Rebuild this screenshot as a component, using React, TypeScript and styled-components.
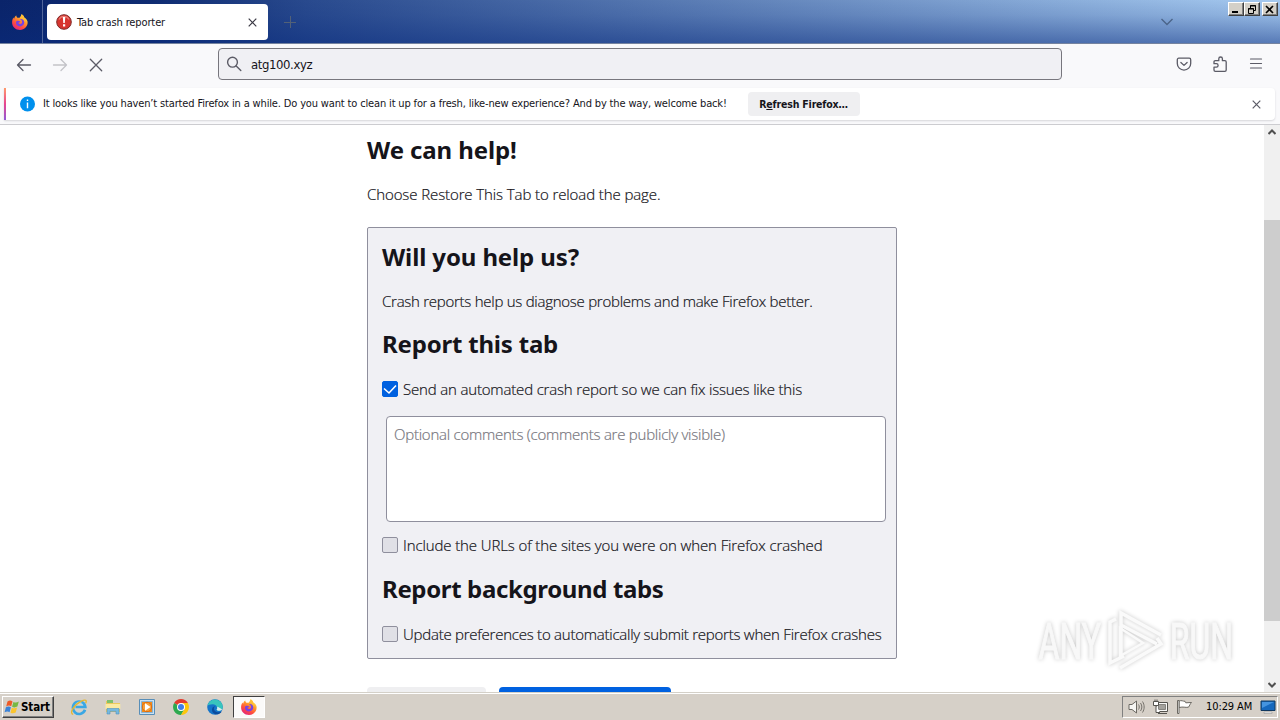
import React from 'react';
import styled, { createGlobalStyle, css } from 'styled-components';

const GlobalStyle = createGlobalStyle`
  * {
    box-sizing: border-box;
  }

  body {
    margin: 0;
    overflow: hidden;
    background: #fff;
    color: #15141a;
    font-family: 'DejaVu Sans Condensed', 'DejaVu Sans', sans-serif;
    font-stretch: condensed;
    font-size: 11px;
  }

  h2, p {
    margin: 0;
  }
`;

const Screen = styled.div`
  position: relative;
  display: flex;
  flex-direction: column;
  width: 1280px;
  height: 720px;
  overflow: hidden;
`;

const Label = styled.span<{ $track?: number; $size?: number }>`
  font-size: ${({ $size }) => $size || 11}px;
  letter-spacing: ${({ $track }) => $track || 0}px;
  line-height: 16px;
  white-space: nowrap;
`;

/* ---- title bar ---- */

const TitleBar = styled.header`
  display: flex;
  flex: none;
  height: 44px;
  border-bottom: 1px solid #75839f;
  background:
    linear-gradient(180deg, rgba(10, 44, 126, 0) 0%, rgba(10, 44, 126, 0.12) 35%, rgba(10, 44, 126, 0.5) 100%),
    linear-gradient(90deg, #0a246a 0%, #0f2c72 12%, #294a8e 24%, #a6caf0 100%);
`;

const FirefoxView = styled.div`
  display: flex;
  align-items: center;
  justify-content: center;
  width: 43px;
  padding-right: 3px;
  border-right: 1px solid #50659a;
`;

const Tab = styled.div`
  display: flex;
  align-items: center;
  width: 221px;
  height: 36px;
  margin: 4px 0 0 4px;
  padding: 0 11px 0 9px;
  border-radius: 4px;
  background: #fff;

  ${Label} {
    flex: 1;
    margin-left: 5px;
    padding-top: 2px;
  }
`;

const NewTab = styled.div`
  display: flex;
  align-items: center;
  width: 44px;
  justify-content: center;
  padding-top: 1px;
`;

const TabListButton = styled.div`
  display: flex;
  align-items: center;
  margin-left: auto;
  margin-right: 55px;
`;

const WindowButtons = styled.div`
  display: flex;
  width: 52px;
  padding-top: 2px;
`;

const WindowButton = styled.div<{ $gap?: boolean }>`
  display: flex;
  align-items: center;
  justify-content: center;
  width: 16px;
  height: 14px;
  margin-left: ${({ $gap }) => ($gap ? 2 : 0)}px;
  background: #d4d0c8;
  border: 1px solid;
  border-color: #fff #404040 #404040 #fff;
  box-shadow: inset -1px -1px 0 #808080;
`;

/* ---- toolbar ---- */

const Toolbar = styled.nav`
  display: flex;
  flex: none;
  align-items: center;
  height: 44px;
  padding: 0 16px 4px;
  background: #f9f9fb;
`;

const NavButtons = styled.div`
  display: flex;
  gap: 20px;
  width: 202px;
  padding-top: 2px;
`;

const UrlBar = styled.div`
  display: flex;
  align-items: center;
  width: 844px;
  height: 32px;
  padding-left: 7px;
  border: 1px solid #77767d;
  border-radius: 4px;
  background: #f0f0f4;

  ${Label} {
    margin-left: 9px;
    padding-top: 2px;
  }
`;

const ToolbarActions = styled.div`
  display: flex;
  gap: 20px;
  margin-left: auto;
`;

/* ---- notification ---- */

const NotificationArea = styled.div`
  flex: none;
  height: 37px;
  padding: 0 5px 4px 4px;
  border-bottom: 1px solid #ccccd0;
  background: #f9f9fb;
`;

const Notification = styled.div`
  display: flex;
  align-items: center;
  height: 32px;
  border-radius: 0 4px 4px 0;
  background: #fff;
  box-shadow: 0 1px 2px rgba(58, 57, 68, 0.18);

  &::before {
    content: '';
    width: 2px;
    height: 32px;
    margin-right: 13px;
    background: linear-gradient(180deg, #ff9a6c 0%, #e7458f 50%, #9059d6 100%);
  }
`;

const Message = styled(Label)`
  width: 685px;
  margin-left: 8px;
`;

const RefreshButton = styled.div`
  display: flex;
  align-items: center;
  justify-content: center;
  width: 112px;
  height: 24px;
  margin-left: 20px;
  padding-right: 1px;
  border-radius: 4px;
  background: #efeff1;
  font-size: 10.5px;
  font-weight: 700;
  letter-spacing: -0.18px;
  white-space: nowrap;
`;

const CloseNotification = styled.div`
  display: flex;
  margin-left: auto;
  margin-right: 14px;
`;

/* ---- page ---- */

const Viewport = styled.div`
  display: flex;
  flex: 1;
  min-height: 0;
`;

const Page = styled.main`
  flex: 1;
  padding: 10px 0 0 367px;
  overflow: hidden;
`;

const Title = styled.h2<{ $track?: number }>`
  height: 30px;
  font-family: 'Noto Sans', sans-serif;
  font-stretch: normal;
  font-size: 24px;
  font-weight: 700;
  line-height: 30px;
  letter-spacing: ${({ $track }) => $track || 0}px;
  white-space: nowrap;
`;

const bodyText = css<{ $track?: number }>`
  font-family: 'Open Sans', sans-serif;
  font-stretch: normal;
  font-size: 15px;
  font-weight: 300;
  line-height: 22px;
  letter-spacing: ${({ $track }) => $track || 0}px;
  white-space: nowrap;
  -webkit-text-stroke: 0.2px currentColor;
`;

const Paragraph = styled.p<{ $track?: number }>`
  ${bodyText}
  margin: 18px 0 22px;
`;

const ReportBox = styled.section`
  width: 530px;
  height: 432px;
  padding: 14px 10px 0 14px;
  border: 1px solid #8f8f9d;
  border-radius: 2px;
  background: #f0f0f4;

  ${Paragraph} {
    margin-bottom: 17px;
  }
`;

const CheckRow = styled.label`
  display: flex;
  align-items: center;
  gap: 5px;
  height: 22px;

  ${Title} + & {
    margin-top: 19px;
  }

  & + ${Title} {
    margin-top: 18px;
  }
`;

const CheckText = styled.span<{ $track?: number }>`
  ${bodyText}
`;

const CheckBox = styled.span<{ $checked?: boolean }>`
  display: flex;
  flex: none;
  align-items: center;
  justify-content: center;
  width: 16px;
  height: 16px;
  border: 1px solid ${({ $checked }) => ($checked ? '#0061e0' : '#8f8f9d')};
  border-radius: 2px;
  background: ${({ $checked }) => ($checked ? '#0061e0' : '#e0e0e6')};
`;

const Comments = styled.div<{ $track?: number }>`
  ${bodyText}
  width: 500px;
  height: 106px;
  margin: 16px 0 12px 4px;
  padding: 6px 7px;
  border: 1px solid #8f8f9d;
  border-radius: 4px;
  background: #fff;
  color: #77767d;
`;

const ButtonRow = styled.div`
  display: flex;
  gap: 13px;
  margin-top: 28px;
`;

const PageButton = styled.div<{ $primary?: boolean }>`
  width: ${({ $primary }) => ($primary ? 172 : 119)}px;
  height: 32px;
  border-radius: 4px;
  background: ${({ $primary }) => ($primary ? '#0061e0' : '#efeff1')};
`;

const ScrollBar = styled.div`
  display: flex;
  flex-direction: column;
  align-items: center;
  width: 16px;
  padding: 4px 0;
  background: #f0f0f0;
`;

const ScrollThumb = styled.div`
  width: 16px;
  height: 401px;
  margin: 85px 0 auto;
  background: #cdcdcd;
`;

/* ---- taskbar ---- */

const Taskbar = styled.footer`
  display: flex;
  flex: none;
  align-items: center;
  height: 28px;
  padding: 1px 2px 0;
  border-top: 1px solid #d4d0c8;
  background: #d6d0c8;
  box-shadow: inset 0 1px 0 #fff;
`;

const StartButton = styled.div`
  display: flex;
  align-items: center;
  width: 52px;
  height: 22px;
  padding: 0 1px;
  border: 1px solid;
  border-color: #fff #404040 #404040 #fff;
  box-shadow: inset -1px -1px 0 #808080;
  font-size: 11.5px;
  font-weight: 700;
  letter-spacing: -0.1px;
  color: #000;
`;

const QuickLaunch = styled.div`
  display: flex;
  align-items: center;
  margin-left: 8px;
`;

const TaskItem = styled.div<{ $active?: boolean }>`
  display: flex;
  align-items: center;
  justify-content: center;
  width: ${({ $active }) => ($active ? 32 : 34)}px;
  height: 22px;

  ${({ $active }) => $active && css`
    margin-left: 1px;
    border: 1px solid;
    border-color: #404040 #fff #fff #404040;
    background: #fbfaf9;
  `}
`;

const Tray = styled.div`
  display: flex;
  align-items: center;
  width: 156px;
  height: 22px;
  margin-left: auto;
  padding: 0 1px 0 5px;
  border: 1px solid;
  border-color: #808080 #fff #fff #808080;
  color: #000;

  svg {
    margin-right: 7px;
  }

  ${Label} {
    margin-left: 6px;
  }

  svg:last-child {
    margin: 0 0 0 auto;
  }
`;

const Watermark = styled.div`
  position: absolute;
  top: 608px;
  left: 1036px;
  display: flex;
  align-items: center;
  height: 64px;
  filter: drop-shadow(0 0 2px rgba(0, 0, 0, 0.22));
`;

const WatermarkWord = styled.span<{ $width: number }>`
  display: flex;
  justify-content: center;
  width: ${({ $width }) => $width}px;
  color: #f8f8f8;
  font-family: Roboto, sans-serif;
  font-stretch: normal;
  font-size: 50px;
  line-height: 64px;
  -webkit-text-stroke: 1px #f8f8f8;

  span {
    transform: translateY(2px) scaleX(0.64);
  }
`;

/* ---- icons ---- */

const FirefoxIcon = ({ id }: { id: string }) => (
  <svg width="16" height="16" viewBox="0 0 16 16">
    <defs>
      <linearGradient id={id} x1="0.85" y1="0.1" x2="0.3" y2="1">
        <stop offset="0" stopColor="#fff04f" />
        <stop offset="0.35" stopColor="#ff9a2b" />
        <stop offset="0.7" stopColor="#ff4b3e" />
        <stop offset="1" stopColor="#e3257d" />
      </linearGradient>
    </defs>
    <path fill={`url(#${id})`} d="M9.6.2c1.6.9 2.3 2 2.7 3.2 1.7.8 2.9 2.3 3.3 4.3.4 4.6-3.200 8.200-7.600 8.200C3.500 15.900.1 12.600.1 8.400c0-2 .5-3.700 1.400-5 .1.600.3 1 .6 1.300C2.500 3.300 3.200 2.200 4.300 1.500c0 1 .4 1.700 1.100 2.200.8-.1 1.600-.1 2.200.1C8.200 2.700 9.200 1.700 9.600.2z" />
    <path fill="#7542e5" d="M8 5.100c2.500-.5 4.400 1.300 4.300 3.500-.1 2.300-1.900 3.900-4.200 3.900-2.200 0-4-1.500-4.100-3.500-.1-1.400.7-2.300 1.800-2.200 1 0 1.300.7 2.700.5-.2 1-1.300 1.100-2.200 1.500.4 1 1.400 1.400 2.500 1.200 1.900-.5 1.700-3.300-.8-4.900z" />
    <path fill="#ffbd36" d="M9.600.2c1.600.9 2.300 2.200 2.700 3.600.8 1.300 1 3.100.3 4.600.1-1.900-.9-3.500-2.500-3.800C8.700 3.800 8.900 1.700 9.600.2z" />
  </svg>
);

const CrashIcon = () => (
  <svg width="16" height="16" viewBox="0 0 16 16">
    <circle cx="8" cy="8" r="7.3" fill="#d7352f" stroke="#7d2a28" />
    <path d="M3 5.500a5.600 5.600 0 0 1 10 0" fill="none" stroke="#ee7d75" strokeWidth="1.2" />
    <path d="M6.800 3h2.500l-.5 6H7.300zM7 10.300h2.200v2.200H7z" fill="#fff" />
  </svg>
);

const CrossIcon = ({ size, color = '#3a3944' }: { size: number; color?: string }) => (
  <svg width={size} height={size} viewBox="0 0 9 9" fill="none" stroke={color} strokeWidth="1.2">
    <path d="m.7.7 7.600 7.600M8.300.7.7 8.300" />
  </svg>
);

const ArrowIcon = ({ forward }: { forward?: boolean }) => (
  <svg width="16" height="16" viewBox="0 0 16 16" fill="none" stroke={forward ? '#c3c3c8' : '#5b5b66'} strokeWidth="1.3" strokeLinecap="round" strokeLinejoin="round">
    <path d={forward ? 'M1.500 8h13M9 2.500 14.500 8 9 13.500' : 'M14.500 8h-13M7 2.500 1.500 8 7 13.500'} />
  </svg>
);

const StopIcon = () => (
  <svg width="16" height="16" viewBox="0 0 16 16" fill="none" stroke="#5b5b66" strokeWidth="1.3" strokeLinecap="round">
    <path d="m2.300 2.300 11.400 11.400m0-11.400L2.300 13.700" />
  </svg>
);

const SearchIcon = () => (
  <svg width="16" height="16" viewBox="0 0 16 16" fill="none" stroke="#5b5b66" strokeWidth="1.4" strokeLinecap="round">
    <circle cx="6.5" cy="6.2" r="4.9" />
    <path d="m10.200 9.900 4.600 4.600" />
  </svg>
);

const PocketIcon = () => (
  <svg width="16" height="16" viewBox="0 0 16 16" fill="none" stroke="#5b5b66" strokeWidth="1.3" strokeLinecap="round" strokeLinejoin="round">
    <path d="M2.800 2.200h10.400c.9 0 1.500.6 1.500 1.500v3.700a6.700 6.700 0 0 1-13.400 0V3.700c0-.9.6-1.500 1.500-1.500z" />
    <path d="M4.900 6.500 8 9.400l3.100-2.900" />
  </svg>
);

const ExtensionIcon = () => (
  <svg width="16" height="16" viewBox="0 0 16 16" fill="none" stroke="#5b5b66" strokeWidth="1.3" strokeLinejoin="round">
    <path d="M3.300 15.300h9.600c.8 0 1.300-.5 1.300-1.300V6c0-.8-.5-1.300-1.300-1.300h-2.500V2.800a1.800 1.800 0 0 0-3.600 0v1.900H3.300C2.500 4.700 2 5.200 2 6v1.700h2.400a1.700 1.700 0 0 1 0 3.400H2V14c0 .8.5 1.300 1.300 1.300z" />
  </svg>
);

const MenuIcon = () => (
  <svg width="16" height="16" viewBox="0 0 16 16" stroke="#5b5b66" strokeWidth="1.2" strokeLinecap="round">
    <path d="M2.500 3h11M2.500 7.500h11M2.500 12h11" />
  </svg>
);

const InfoIcon = () => (
  <svg width="16" height="16" viewBox="0 0 16 16">
    <circle cx="8.5" cy="8" r="7.5" fill="#0090ed" />
    <path d="M7.800 3.500h1.400V5H7.800zM7.800 6.500h1.400v5.800H7.800z" fill="#fff" />
  </svg>
);

const Chevron = ({ up, size = 8, color = '#505050', weight = 2 }: { up?: boolean; size?: number; color?: string; weight?: number }) => (
  <svg width={size} height={size / 2 + 2} viewBox={`0 0 ${size} ${size / 2 + 2}`} fill="none" stroke={color} strokeWidth={weight}>
    <path d={up ? `M.5 ${size / 2 + 1} ${size / 2} 1.500l${size / 2 - 0.5} ${size / 2 - 0.5}` : `M.5 1l${size / 2 - 0.5} ${size / 2 - 0.5} ${size / 2 - 0.5}-${size / 2 - 0.5}`} />
  </svg>
);

const StartFlag = () => (
  <svg width="17" height="16" viewBox="0 0 17 16">
    <path d="M3.500 2.500C5.500 1.200 7 1.500 8.500 2.400L7.200 7.300C5.700 6.400 4.200 6.300 2.200 7.400z" fill="#ee5a27" />
    <path d="M9.400 2.900c1.800.8 3.400.8 5.400-.3l-1.400 5c-1.900 1-3.600 1.100-5.300.2z" fill="#76b843" />
    <path d="M1.900 8.300c1.900-1 3.500-1 5-.1l-1.300 5c-1.500-.9-3-1-5 .1z" fill="#3b83d8" />
    <path d="M7.800 8.700c1.800.9 3.400.8 5.300-.2l-1.400 5c-1.900 1-3.500 1-5.200.2z" fill="#fbc52e" />
  </svg>
);

const ExplorerIcon = () => (
  <svg width="18" height="18" viewBox="0 0 18 18" fill="none">
    <path d="M15 11.800A6.200 6.200 0 1 1 15.300 9H5.500" stroke="#3aa7e4" strokeWidth="2.7" />
    <path d="M5.300 7.300C6.300 3.500 11.300 3 12.800 7" stroke="#8ed9fa" strokeWidth="1" />
    <path d="M3.200 16.300C-1 15.500 3.500 7 11 3.300c5-2.500 6-.7 4.700 1.800" stroke="#e6b72f" strokeWidth="1.3" />
  </svg>
);

const FolderIcon = () => (
  <svg width="18" height="18" viewBox="0 0 18 18">
    <path d="M2 3h5l1 2h8v9H2z" fill="#ecc95c" />
    <path d="M3 2h6v3H3z" fill="#7fc06b" />
    <path d="M1.500 6h14.800v5H1.500z" fill="#faeaa2" />
    <path d="M3 16v-5.500h12V16h-3v-2.700H6V16z" fill="#76b9df" stroke="#4d91bf" strokeWidth="0.6" />
  </svg>
);

const MediaIcon = () => (
  <svg width="18" height="18" viewBox="0 0 18 18">
    <path d="M1.500 1.500h15v15h-15z" fill="#c8e1f4" stroke="#588eb8" />
    <path d="M3.500 3.500h11v11h-11z" fill="#f08a1d" stroke="#86b2d4" />
    <circle cx="9" cy="9" r="4.7" fill="#f6a03c" stroke="#e06c0a" />
    <path d="m7 5.300 5.500 3.700L7 12.700z" fill="#fff" />
  </svg>
);

const ChromeIcon = () => (
  <svg width="16" height="16" viewBox="0 0 16 16">
    <path d="M8 8 1.100 4A8 8 0 0 1 14.900 4H8z" fill="#e33b2e" />
    <path d="M8 8 1.100 4A8 8 0 0 0 8 16l3.500-6z" fill="#2da94f" />
    <path d="M14.900 4A8 8 0 0 1 8 16l3.500-6L8 4z" fill="#fdc60b" />
    <circle cx="8" cy="8" r="4" fill="#fff" />
    <circle cx="8" cy="8" r="3" fill="#3f7ee8" />
  </svg>
);

const EdgeIcon = () => (
  <svg width="16" height="16" viewBox="0 0 16 16">
    <circle cx="8" cy="8" r="7.8" fill="#1574c9" />
    <path d="M.3 7A7.800 7.800 0 0 1 15.800 8c0 2.600-2 4-4.300 3.700-2-.2-2.300-1-1.600-1.900C11 7.300 8.300 5.300 5.600 5.300 3 5.300 1 6.200.3 7z" fill="#39c5bd" />
    <path d="M5.600 8.500C3.500 12.500 7 16 11 15.200c2-.4 3.300-1.700 3.800-2.600-4.300 2-8.500-.3-7.700-3.800.2-.9.7-1.200 1-1.400-1-.1-1.900.2-2.500 1.100z" fill="#0c4c9d" />
    <path d="M10 10c.6-.9.4-1.600-.2-2.200 1.700.2 3.500 1.500 5.300 2.800-.8 1-1.900 1.300-3.600 1.100-1.600-.2-2.200-.9-1.500-1.700z" fill="#d8ecee" />
  </svg>
);

const VolumeIcon = () => (
  <svg width="17" height="16" viewBox="0 0 17 16" fill="none" stroke="#6b6862">
    <path d="M1 5.500h3L8.500 2v12L4 10.500H1z" fill="#f6f5f2" />
    <path d="M10.500 5.500c1 1.500 1 3.500 0 5M12.500 4c1.800 2.500 1.800 5.500 0 8M14.500 2.500c2.200 3.500 2.200 7.500 0 11" strokeWidth="0.9" />
  </svg>
);

const NetworkIcon = () => (
  <svg width="17" height="16" viewBox="0 0 17 16" stroke="#55534e">
    <path d="M4.500 3.500h11v9h-11z" fill="#f8f8f6" />
    <path d="M6.500 5.500h7v5h-7z" fill="#a3a19c" stroke="#85837e" />
    <path d="M6 14.500h9" />
    <path d="M1.500 2.500h5v4h-5zM3 .5v2M5 .5v2M4 6.500v7h4" fill="#fff" />
  </svg>
);

const FlagIcon = () => (
  <svg width="17" height="16" viewBox="0 0 17 16" stroke="#6b6862">
    <path d="M3 2c2.500-1 4 .3 6 .3l.8 1.500 5.700-.3c-1.500 1.500-1.800 3-3 4.700-3.500.6-5-.8-9.500.3z" fill="#fff" />
    <path d="M1.500 1.500v13H3v-13z" fill="#fff" />
  </svg>
);

const DesktopIcon = () => (
  <svg width="16" height="16" viewBox="0 0 16 16">
    <path d="M1 2h14v9.500H1z" fill="#1668bd" stroke="#10385f" />
    <path d="M2 3h12L2 9z" fill="#4594df" />
    <path d="M4 13h8v1.500H4z" fill="#f2f2f2" stroke="#8b8b8b" strokeWidth="0.5" />
  </svg>
);

const WatermarkLogo = () => (
  <svg width="60" height="64" viewBox="0 0 60 64" fill="none" stroke="#fafafa" strokeWidth="3.5">
    <path d="M17 46V5l40 22" />
    <path d="M12 11 6 14v41l14-7M16 60l41-24-4-6" />
    <path d="M16 20v28l23-13z" strokeWidth="2.5" />
    <path d="m17 17 36 19" />
  </svg>
);

const App: React.FC = () => (
  <Screen>
    <GlobalStyle />
    <TitleBar>
      <FirefoxView><FirefoxIcon id="fxView" /></FirefoxView>
      <Tab>
        <CrashIcon />
        <Label $track={-0.12}>Tab crash reporter</Label>
        <CrossIcon size={9} />
      </Tab>
      <NewTab>
        <svg width="12" height="12" viewBox="0 0 12 12" stroke="#536177"><path d="M6.500 0v12M0 6.500h12" /></svg>
      </NewTab>
      <TabListButton><Chevron size={12} color="#4c6589" weight={1.4} /></TabListButton>
      <WindowButtons>
        <WindowButton>
          <svg width="10" height="9" viewBox="0 0 10 9"><path d="M1 6h6v2H1z" /></svg>
        </WindowButton>
        <WindowButton>
          <svg width="10" height="9" viewBox="0 0 10 9" fill="none" stroke="#000"><path d="M3.500 3V.5h5v5H7M3 1h6M1.500 3.500h5v5h-5zM1 4h6" /></svg>
        </WindowButton>
        <WindowButton $gap>
          <svg width="10" height="9" viewBox="0 0 10 9" stroke="#000" strokeWidth="1.6"><path d="m1 1 7 7M8 1 1 8" /></svg>
        </WindowButton>
      </WindowButtons>
    </TitleBar>

    <Toolbar>
      <NavButtons>
        <ArrowIcon />
        <ArrowIcon forward />
        <StopIcon />
      </NavButtons>
      <UrlBar>
        <SearchIcon />
        <Label $size={13} $track={-0.4}>atg100.xyz</Label>
      </UrlBar>
      <ToolbarActions>
        <PocketIcon />
        <ExtensionIcon />
        <MenuIcon />
      </ToolbarActions>
    </Toolbar>

    <NotificationArea>
      <Notification>
        <InfoIcon />
        <Message $track={-0.15}>It looks like you haven’t started Firefox in a while. Do you want to clean it up for a fresh, like-new experience? And by the way, welcome back!</Message>
        <RefreshButton>R<u>e</u>fresh Firefox…</RefreshButton>
        <CloseNotification><CrossIcon size={9} color="#5b5b66" /></CloseNotification>
      </Notification>
    </NotificationArea>

    <Viewport>
      <Page>
        <Title $track={-0.1}>We can help!</Title>
        <Paragraph $track={-0.1}>Choose Restore This Tab to reload the page.</Paragraph>
        <ReportBox>
          <Title $track={-0.12}>Will you help us?</Title>
          <Paragraph $track={-0.26}>Crash reports help us diagnose problems and make Firefox better.</Paragraph>
          <Title $track={-0.2}>Report this tab</Title>
          <CheckRow>
            <CheckBox $checked>
              <svg width="14" height="14" viewBox="0 0 14 14" fill="none" stroke="#fff" strokeWidth="1.6"><path d="m1 6.500 5 4.500 7-7.500" /></svg>
            </CheckBox>
            <CheckText $track={-0.17}>Send an automated crash report so we can fix issues like this</CheckText>
          </CheckRow>
          <Comments $track={-0.24}>Optional comments (comments are publicly visible)</Comments>
          <CheckRow>
            <CheckBox />
            <CheckText $track={-0.11}>Include the URLs of the sites you were on when Firefox crashed</CheckText>
          </CheckRow>
          <Title $track={-0.36}>Report background tabs</Title>
          <CheckRow>
            <CheckBox />
            <CheckText $track={-0.24}>Update preferences to automatically submit reports when Firefox crashes</CheckText>
          </CheckRow>
        </ReportBox>
        <ButtonRow>
          <PageButton />
          <PageButton $primary />
        </ButtonRow>
      </Page>
      <ScrollBar>
        <Chevron up />
        <ScrollThumb />
        <Chevron />
      </ScrollBar>
    </Viewport>

    <Taskbar>
      <StartButton><StartFlag />Start</StartButton>
      <QuickLaunch>
        <TaskItem><ExplorerIcon /></TaskItem>
        <TaskItem><FolderIcon /></TaskItem>
        <TaskItem><MediaIcon /></TaskItem>
        <TaskItem><ChromeIcon /></TaskItem>
        <TaskItem><EdgeIcon /></TaskItem>
        <TaskItem $active><FirefoxIcon id="fxTask" /></TaskItem>
      </QuickLaunch>
      <Tray>
        <VolumeIcon />
        <NetworkIcon />
        <FlagIcon />
        <Label $track={-0.1}>10:29 AM</Label>
        <DesktopIcon />
      </Tray>
    </Taskbar>

    <Watermark>
      <WatermarkWord $width={68}><span>ANY</span></WatermarkWord>
      <WatermarkLogo />
      <WatermarkWord $width={74}><span>RUN</span></WatermarkWord>
    </Watermark>
  </Screen>
);

export default App;
